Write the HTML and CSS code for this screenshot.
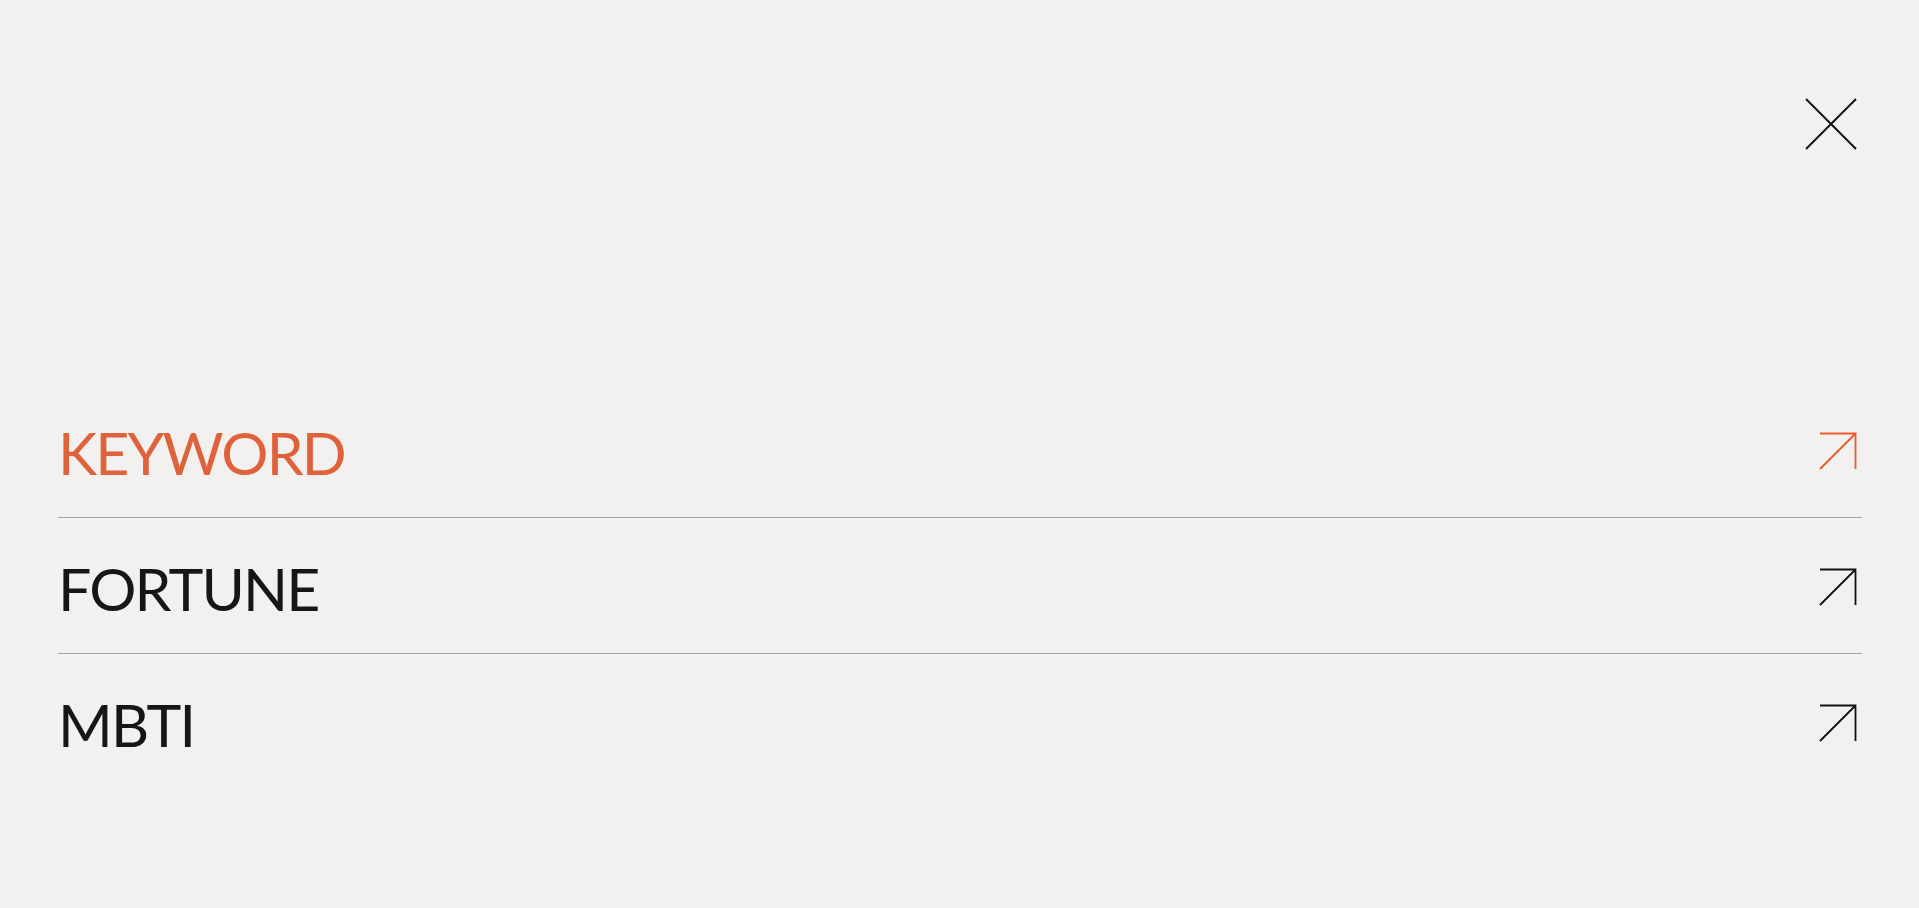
FILE: index.html
```html
<!DOCTYPE html>
<html lang="en">
<head>
<meta charset="utf-8">
<title>Menu</title>
<link rel="stylesheet" href="styles.css">
</head>
<body>
<div class="menu">
  <header class="menu-top">
    <button class="close" aria-label="Close">
      <svg width="52" height="52" viewBox="0 0 52 52"><path d="M1 1 L51 51 M51 1 L1 51" stroke="#111" stroke-width="2" fill="none"/></svg>
    </button>
  </header>
  <nav class="menu-list">
    <a class="item active" href="#"><span class="label">KEYWORD</span>
      <svg class="arrow" width="38" height="38" viewBox="0 0 38 38"><path d="M1 1.5 H36.5 V37 M36.5 1.5 L1 37" fill="none" stroke="currentColor" stroke-width="1.8"/></svg>
    </a>
    <a class="item" href="#"><span class="label">FORTUNE</span>
      <svg class="arrow" width="38" height="38" viewBox="0 0 38 38"><path d="M1 1.5 H36.5 V37 M36.5 1.5 L1 37" fill="none" stroke="currentColor" stroke-width="1.8"/></svg>
    </a>
    <a class="item" href="#"><span class="label">MBTI</span>
      <svg class="arrow" width="38" height="38" viewBox="0 0 38 38"><path d="M1 1.5 H36.5 V37 M36.5 1.5 L1 37" fill="none" stroke="currentColor" stroke-width="1.8"/></svg>
    </a>
  </nav>
</div>
</body>
</html>
```
FILE: styles.css
```css
* { box-sizing: border-box; }
html, body { margin: 0; padding: 0; }
body {
  background: #f2f1ef;
  font-family: "Lato", "Liberation Sans", sans-serif;
  height: 908px;
  overflow: hidden;
}
.menu { padding: 0 57px 0 58px; }
.menu-top {
  display: flex;
  justify-content: flex-end;
  padding-top: 98px;
  height: 382px;
}
.close {
  background: none;
  border: 0;
  padding: 0;
  width: 52px;
  height: 52px;
  margin-right: 5px;
  cursor: pointer;
}
.close svg { display: block; }
.menu-list { display: flex; flex-direction: column; }
.item {
  display: flex;
  justify-content: space-between;
  align-items: flex-start;
  height: 136px;
  padding-top: 41px;
  border-bottom: 1px solid #a3a3a3;
  color: #161616;
  text-decoration: none;
}
.item:last-child { border-bottom: 0; }
.label {
  font-family: "Lato", "Liberation Sans", sans-serif;
  font-size: 59px;
  font-weight: 400;
  letter-spacing: -1.8px;
  line-height: 60px;
  padding-left: 0;
}
.arrow { display: block; margin-right: 5px; margin-top: 9px; color: #111; }
.item.active .label { color: #e0623a; }
.item.active .arrow { color: #f05a28; }
```
